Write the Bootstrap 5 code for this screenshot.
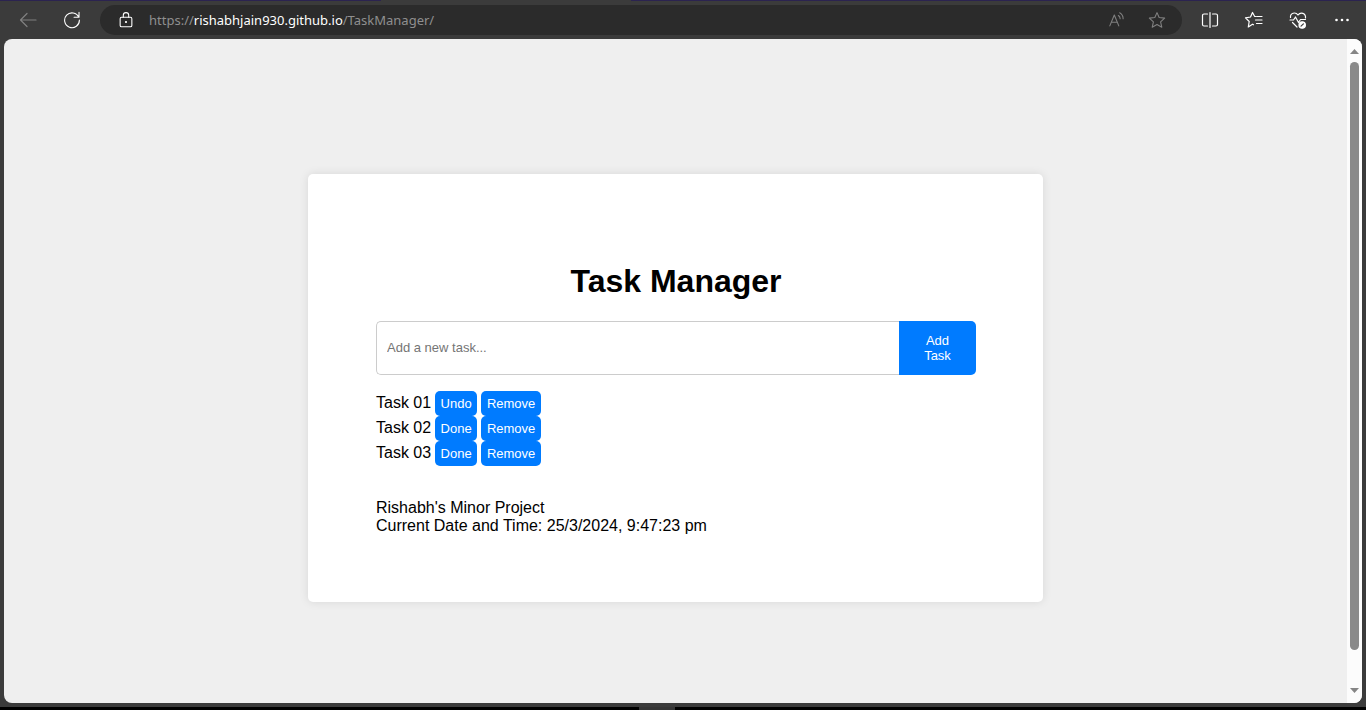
<!DOCTYPE html>
<html lang="en">
<head>
<meta charset="utf-8">
<meta name="viewport" content="width=device-width, initial-scale=1">
<title>Task Manager</title>
<link href="https://cdn.jsdelivr.net/npm/bootstrap@5.3.0/dist/css/bootstrap.min.css" rel="stylesheet">
<style>
  body { background: #3b3b3b; color: #000; font-family: "Liberation Sans", Arial, sans-serif; font-size: 16px; line-height: 18px; }
  .tab-edge { height: 1px; background: #2b2350; }
  .tab-gap { width: 250px; margin-left: 381px; background: #3b3b3b; }
  .toolbar { height: 38px; padding: 0 12px 0 16px; }
  .tool-group { gap: 20px; }
  .tool-btn { width: 24px; height: 24px; color: #fff; line-height: 1; }
  .tool-btn.dim { color: #808080; }
  .tool-btn svg, .lock svg { width: 20px; height: 20px; fill: none; stroke: currentColor; stroke-width: 1.2; stroke-linecap: round; stroke-linejoin: round; }
  .tool-btn svg.icon-small, .lock svg { width: 18px; height: 18px; }
  .address { height: 30px; background: #2b2b2b; margin: 0 16px; padding: 0 13px 0 17px; font-family: "Noto Sans", sans-serif; font-size: 13px; color: #8f8f8f; }
  .address a { color: #8f8f8f; margin-left: 14px; }
  .address a span { color: #fff; }
  .viewport { margin: 0 4px; border-radius: 8px; background: #efefef; }
  .page { padding-top: 33px; }
  .task-card { width: 735px; padding: 67px 67px 67px 68px; background: #fff; border-radius: 5px; box-shadow: 0 0 10px rgba(0,0,0,.1); }
  .task-card h1 { font-size: 32px; line-height: 36px; font-weight: 700; margin: 22px 0; }
  .task-input { font-size: 13px; color: #000; height: 54px; padding: 10px; border: 1px solid #ccc; border-right: 0; border-radius: 5px 0 0 5px; }
  .task-input::placeholder { color: #757575; }
  .btn-blue { --bs-btn-color: #fff; --bs-btn-bg: #007bff; --bs-btn-hover-color: #fff; --bs-btn-hover-bg: #0069d9; --bs-btn-border-width: 0; --bs-btn-font-size: 13px; --bs-btn-line-height: 15px; --bs-btn-padding-x: 5px; --bs-btn-padding-y: 5px; --bs-btn-border-radius: 5px; }
  .btn-add { width: 77px; padding: 10px 20px; border-radius: 0 5px 5px 0; }
  .btn-state { width: 42px; }
  .btn-remove { width: 60px; }
  .task-footer { padding-top: 33px; }
  .scroll-rail { width: 15px; background: #fcfcfc; padding: 10px 0; border-radius: 0 8px 8px 0; }
  .scroll-rail svg { width: 9px; height: 5px; fill: #858585; }
  .scroll-thumb { width: 9px; height: 588px; border-radius: 5px; background: #8a8a8a; margin-top: 8px; }
  .frame-edge { height: 4px; }
  .taskbar { height: 3px; background: #000; padding-right: 52px; }
  .taskbar-item { width: 36px; background: #353535; }
</style>
</head>
<body class="d-flex flex-column vh-100 overflow-hidden">
  <div class="tab-edge d-flex"><div class="tab-gap"></div></div>
  <header class="toolbar d-flex align-items-center flex-shrink-0">
    <nav class="tool-group d-flex" aria-label="Navigation">
      <button class="tool-btn dim btn border-0 p-0 d-flex align-items-center justify-content-center" aria-label="Back"><svg viewBox="0 0 20 20"><path d="M18 10H2.500M9 3.500L2.500 10L9 16.500"/></svg></button>
      <button class="tool-btn btn border-0 p-0 d-flex align-items-center justify-content-center" aria-label="Refresh"><svg class="icon-small" viewBox="0 0 20 20"><path d="M17.500 7A8.200 8.200 0 1 0 18.200 10M17.800 1.500V7H12.300"/></svg></button>
    </nav>
    <div class="address flex-fill d-flex align-items-center rounded-pill">
      <span class="lock d-flex text-white"><svg viewBox="0 0 20 20"><rect x="3.500" y="7" width="13" height="10.500" rx="1.500"/><path d="M7 7V4.800a3 3 0 0 1 6 0V7"/><circle cx="10" cy="12.200" r=".6" fill="currentColor"/></svg></span>
      <a class="text-decoration-none flex-fill" href="https://rishabhjain930.github.io/TaskManager/">https://<span>rishabhjain930.github.io</span>/TaskManager/</a>
      <button class="tool-btn dim btn border-0 p-0 me-3 d-flex align-items-center justify-content-center" aria-label="Read aloud"><svg class="icon-small" viewBox="0 0 20 20"><path d="M2 16.500L7 4.500L12 16.500M3.700 12.500H10.300M11.500 5c1.300.8 2 2 2 3.500M13 2c2.200 1.300 3.800 3.600 3.800 6.500"/></svg></button>
      <button class="tool-btn dim btn border-0 p-0 d-flex align-items-center justify-content-center" aria-label="Favorite"><svg class="icon-small" viewBox="0 0 20 20"><path d="M10 1.800L12.400 7.200L18.500 7.900L14 12L15.300 18L10 15L4.700 18L6 12L1.500 7.900L7.600 7.200Z"/></svg></button>
    </div>
    <nav class="tool-group d-flex" aria-label="Browser tools">
      <button class="tool-btn btn border-0 p-0 d-flex align-items-center justify-content-center" aria-label="Split screen"><svg viewBox="0 0 20 20"><path d="M7.500 4H4A1.500 1.500 0 0 0 2.500 5.500V14.500A1.500 1.500 0 0 0 4 16H7.500M12.500 4H16A1.500 1.500 0 0 1 17.500 5.500V14.500A1.500 1.500 0 0 1 16 16H12.500M10 2.500V17.500"/></svg></button>
      <button class="tool-btn btn border-0 p-0 d-flex align-items-center justify-content-center" aria-label="Favorites"><svg viewBox="0 0 20 20"><path d="M12 6.500H10.700L8.500 2.500L6.500 7L1.500 7.800L5.200 11.500L4.300 17L8.500 14.200L9.500 14.800M13 6.500H18M11.500 10H18M12.500 13.500H18"/></svg></button>
      <button class="tool-btn btn border-0 p-0 d-flex align-items-center justify-content-center" aria-label="Browser essentials"><svg viewBox="0 0 20 20"><path d="M2.500 7.500C2 3 7.500 1.500 10 5C12.500 1.500 18 3 17.500 8M2 10H5.500L7.500 7L10.500 12.500L12.500 9.500H17.500M4.500 12.500L9 17"/><circle cx="14.200" cy="15" r="3.200" fill="currentColor"/><path d="M13 16.200L15.400 13.800" stroke="#3b3b3b"/></svg></button>
      <button class="tool-btn btn border-0 p-0 d-flex align-items-center justify-content-center" aria-label="Settings and more"><svg viewBox="0 0 20 20"><g fill="currentColor" stroke="none"><circle cx="4.500" cy="10" r="1.300"/><circle cx="10" cy="10" r="1.300"/><circle cx="15.500" cy="10" r="1.300"/></g></svg></button>
    </nav>
  </header>

  <div class="viewport flex-fill d-flex">
    <main class="page flex-fill d-flex align-items-center justify-content-center">
      <section class="task-card">
        <h1 class="text-center">Task Manager</h1>
        <form class="d-flex mb-3">
          <input class="task-input form-control" type="text" placeholder="Add a new task..." aria-label="New task">
          <button class="btn btn-blue btn-add flex-shrink-0" type="button">Add Task</button>
        </form>
        <ul class="list-unstyled mb-0">
          <li class="d-flex align-items-baseline gap-1"><span>Task 01</span><button class="btn btn-blue btn-state">Undo</button><button class="btn btn-blue btn-remove">Remove</button></li>
          <li class="d-flex align-items-baseline gap-1"><span>Task 02</span><button class="btn btn-blue btn-state">Done</button><button class="btn btn-blue btn-remove">Remove</button></li>
          <li class="d-flex align-items-baseline gap-1"><span>Task 03</span><button class="btn btn-blue btn-state">Done</button><button class="btn btn-blue btn-remove">Remove</button></li>
        </ul>
        <footer class="task-footer">
          <div>Rishabh's Minor Project</div>
          <div>Current Date and Time: 25/3/2024, 9:47:23 pm</div>
        </footer>
      </section>
    </main>
    <div class="scroll-rail d-flex flex-column align-items-center" aria-hidden="true">
      <svg viewBox="0 0 9 5"><path d="M0 5L4.500 0L9 5Z"/></svg>
      <div class="scroll-thumb"></div>
      <svg class="mt-auto" viewBox="0 0 9 5"><path d="M0 0L4.500 5L9 0Z"/></svg>
    </div>
  </div>
  <div class="frame-edge"></div>
  <div class="taskbar d-flex justify-content-center flex-shrink-0"><div class="taskbar-item"></div></div>
<script src="https://cdn.jsdelivr.net/npm/bootstrap@5.3.0/dist/js/bootstrap.bundle.min.js"></script>
</body>
</html>
